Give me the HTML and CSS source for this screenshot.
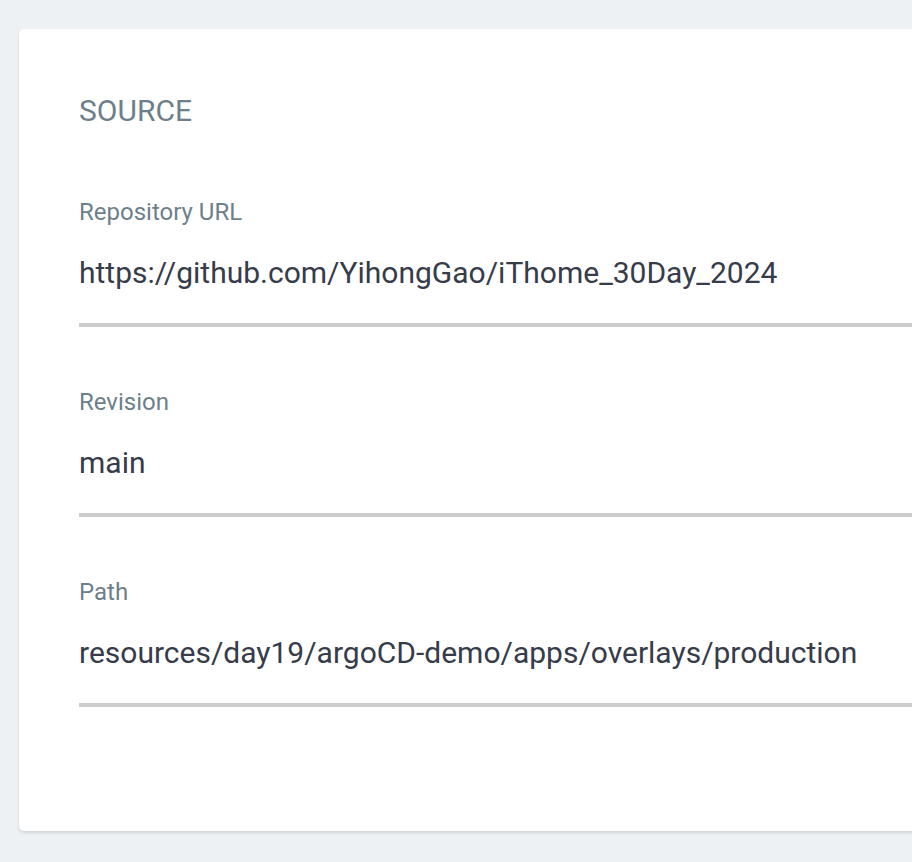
FILE: index.html
```html
<!DOCTYPE html>
<html>
<head>
<meta charset="utf-8">
<link rel="stylesheet" href="styles.css">
</head>
<body>
<div class="page">
  <div class="card">
    <h2 class="card-title">SOURCE</h2>
    <div class="field field-first">
      <div class="field-label">Repository URL</div>
      <div class="field-value">https://github.com/YihongGao/iThome_30Day_2024</div>
    </div>
    <div class="field">
      <div class="field-label">Revision</div>
      <div class="field-value">main</div>
    </div>
    <div class="field">
      <div class="field-label">Path</div>
      <div class="field-value">resources/day19/argoCD-demo/apps/overlays/production</div>
    </div>
  </div>
</div>
</body>
</html>
```
FILE: styles.css
```css
html, body {
  margin: 0;
  padding: 0;
  background: #eef1f3;
  overflow: hidden;
  height: 100%;
}
.page {
  padding: 29px 0 0 19px;
  font-family: Roboto, "Noto Sans", sans-serif;
}
.card {
  width: 1000px;
  height: 802px;
  box-sizing: border-box;
  background: #fff;
  border-radius: 5px;
  box-shadow: 0 2px 3px rgba(0, 0, 0, 0.12);
  padding: 64px 0 0 60px;
}
.card-title {
  margin: 0;
  font-size: 30px;
  line-height: 36px;
  font-weight: 400;
  color: #6d7f8b;
}
.field {
  margin-top: 61px;
}
.field-first {
  margin-top: 69px;
}
.field-label {
  font-size: 24px;
  line-height: 28px;
  color: #6d7f8b;
}
.field-value {
  font-size: 30px;
  line-height: 36px;
  color: #363c4a;
  margin-top: 29px;
  padding-bottom: 32px;
  border-bottom: 4px solid #cccccc;
}
```
